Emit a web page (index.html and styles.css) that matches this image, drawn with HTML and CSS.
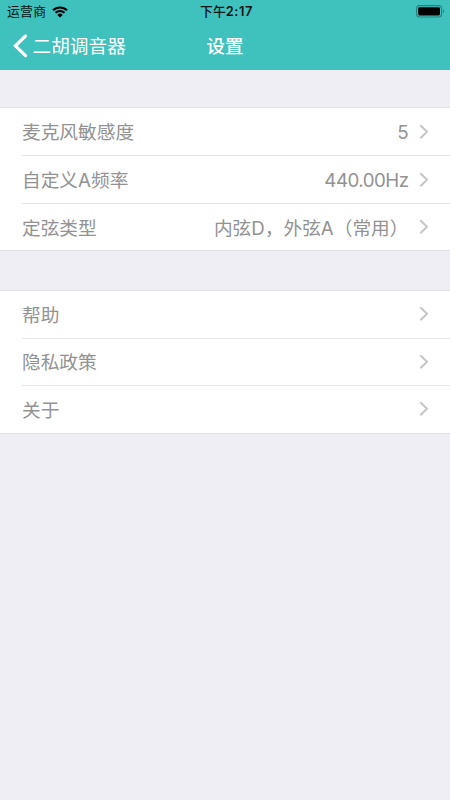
FILE: index.html
```html
<!DOCTYPE html>
<html lang="zh-CN">
<head>
<meta charset="utf-8">
<title>设置</title>
<link rel="stylesheet" href="styles.css">
</head>
<body>
<svg class="defs" aria-hidden="true"><symbol id="chevron" viewBox="0 0 10 16"><path d="M1.3 1.3 8 7.8 1.3 14.3"/></symbol></svg>
<header class="header">
  <div class="status">
    <div class="carrier"><span>运营商</span>
      <svg class="wifi" viewBox="0 0 16 12"><path d="M1 4.3a10 10 0 0 1 14 0M3.5 6.8a6.4 6.4 0 0 1 9 0"/><path class="dot" d="M5.3 8.9a3.9 3.9 0 0 1 5.4 0L8 11.6z"/></svg>
    </div>
    <time class="clock">下午<span class="digits">2:17</span></time>
    <svg class="battery" viewBox="0 0 29 13"><rect class="shell" x=".6" y=".6" width="25" height="11.4" rx="3"/><rect x="2.2" y="2.2" width="21.8" height="8.2" rx="1.3"/><path class="cap" d="M27 4.5c1.6.8 1.6 2.8 0 3.6z"/></svg>
  </div>
  <nav class="nav">
    <a class="back"><svg viewBox="0 0 15 24"><path d="M12.5 2 2.4 11.8l10.1 9.8"/></svg><span>二胡调音器</span></a>
    <h1 class="title">设置</h1>
  </nav>
</header>
<main>
  <ul class="group">
    <li class="row"><span>麦克风敏感度</span><span class="value">5</span><svg class="chevron"><use href="#chevron"/></svg></li>
    <li class="row"><span>自定义A频率</span><span class="value number">440.00Hz</span><svg class="chevron"><use href="#chevron"/></svg></li>
    <li class="row"><span>定弦类型</span><span class="value tuning">内弦D，外弦A（常用）</span><svg class="chevron"><use href="#chevron"/></svg></li>
  </ul>
  <ul class="group">
    <li class="row"><span>帮助</span><svg class="chevron"><use href="#chevron"/></svg></li>
    <li class="row"><span>隐私政策</span><svg class="chevron"><use href="#chevron"/></svg></li>
    <li class="row"><span>关于</span><svg class="chevron"><use href="#chevron"/></svg></li>
  </ul>
</main>
</body>
</html>
```
FILE: styles.css
```css
* { box-sizing: border-box; }
body {
  margin: 0;
  min-height: 800px;
  background: #efeef4;
  font-family: Inter, "Noto Sans CJK SC", sans-serif;
}
.defs { display: none; }
.header { height: 70px; background: #3fc1bd; }
.status {
  display: grid;
  grid-template-columns: 1fr auto 1fr;
  align-items: center;
  height: 23px;
  padding: 0 5px 0 7px;
  color: #061413;
  font-size: 12.8px;
  line-height: 20px;
}
.carrier { display: flex; align-items: center; gap: 6px; letter-spacing: .3px; }
.wifi { width: 16px; height: 12px; fill: none; stroke: #000; stroke-width: 2.1; }
.wifi .dot { fill: #000; stroke: none; }
.clock { padding-left: 1px; font-weight: 500; }
.digits { font-weight: 600; letter-spacing: .6px; }
.battery { justify-self: end; width: 29px; height: 13px; }
.shell { fill: none; stroke: #28807e; stroke-width: 1.1; }
.cap { fill: #28807e; }
.nav {
  display: grid;
  grid-template-columns: 1fr auto 1fr;
  align-items: center;
  height: 46px;
  padding: 0 13px;
  color: #fff;
}
.back { display: flex; align-items: center; gap: 4.5px; font-size: 18.7px; }
.back span { line-height: 28px; padding-top: 2px; }
.back svg { width: 15px; height: 24px; fill: none; stroke: #fff; stroke-width: 3.2; stroke-linecap: round; }
.title { margin: 0; font-size: 18.5px; font-weight: 500; line-height: 28px; }
.group {
  margin: 37px 0 0;
  padding: 0;
  list-style: none;
  background: #fff;
  border: solid #e2e1e6;
  border-width: 1px 0;
}
.group + .group { margin-top: 39px; }
.row {
  display: flex;
  align-items: center;
  height: 47px;
  margin-left: 22px;
  padding-right: 21px;
  color: #929292;
  font-size: 18.7px;
  line-height: 28px;
}
.row > span { padding-top: 3px; }
.row + .row { border-top: 1px solid #e5e5e7; }
.row:nth-child(2) { height: 48px; }
.group + .group .row { padding-bottom: 1px; }
.group + .group .row:nth-child(2) { height: 47px; }
.group + .group .row:nth-child(3) { height: 48px; }
.value { margin-left: auto; margin-right: 1px; }
.number { letter-spacing: -.5px; }
/* Keeps the closing bracket's full-width advance. */
.tuning { text-spacing-trim: space-all; }
.chevron {
  width: 10px;
  height: 16px;
  margin-left: 9.5px;
  fill: none;
  stroke: #c5c5ca;
  stroke-width: 2;
}
.row > span:first-child + .chevron { margin-left: auto; }
```
